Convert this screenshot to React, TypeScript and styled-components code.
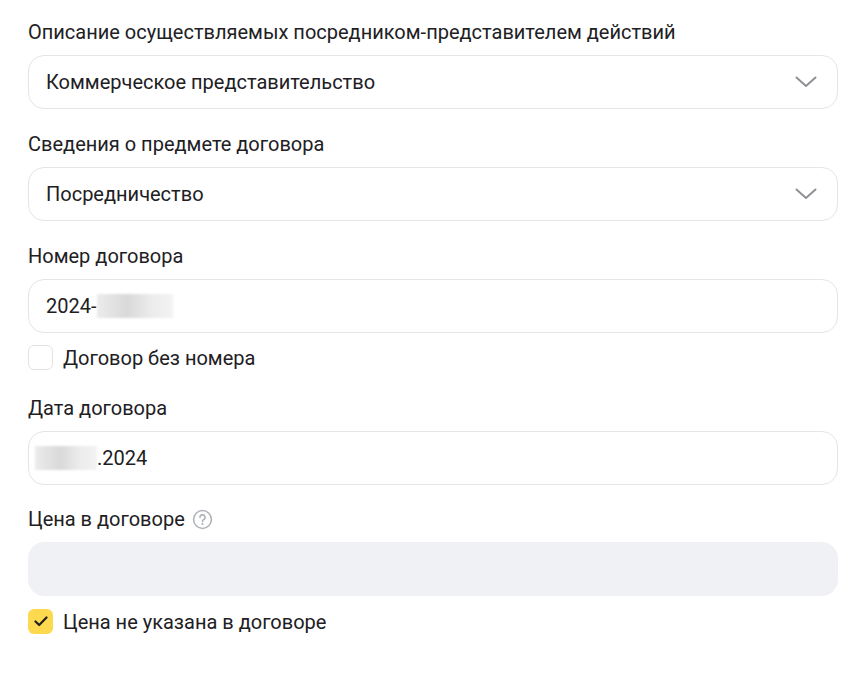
import React from "react";
import styled, { createGlobalStyle } from "styled-components";

const Global = createGlobalStyle`
  body { margin: 0; background: #fff; font-family: Roboto, "Noto Sans", sans-serif; color: #21201f; }
`;

const Form = styled.div`
  padding: 20px 28px 0 28px;
  width: 810px;
  display: flex;
  flex-direction: column;
`;

const Label = styled.div<{ $mt?: number }>`
  font-size: 20px;
  line-height: 24px;
  margin-top: ${(p) => p.$mt ?? 0}px;
  margin-bottom: 11px;
  display: flex;
  align-items: center;
  gap: 7px;
`;

const Field = styled.div<{ $disabled?: boolean; $pl?: number }>`
  height: 54px;
  box-sizing: border-box;
  border-radius: 16px;
  border: 1px solid ${(p) => (p.$disabled ? "#eff1f5" : "#e5e5e7")};
  background: ${(p) => (p.$disabled ? "#eff1f5" : "#fff")};
  display: flex;
  align-items: center;
  justify-content: space-between;
  padding: 0 20px 0 ${(p) => p.$pl ?? 17}px;
  font-size: 20px;
`;

const Value = styled.span`
  display: flex;
  align-items: center;
`;

const Blur = styled.span<{ $w: number }>`
  display: inline-block;
  width: ${(p) => p.$w}px;
  height: 24px;
  background: linear-gradient(90deg, #ececec, #d9d9d9 40%, #ebebeb 70%, #f3f3f3);
  filter: blur(1px);
`;

const CheckRow = styled.label<{ $mt: number }>`
  display: flex;
  align-items: center;
  gap: 10px;
  margin-top: ${(p) => p.$mt}px;
  font-size: 20px;
`;

const Box = styled.span<{ $checked?: boolean }>`
  width: 25px;
  height: 25px;
  box-sizing: border-box;
  border-radius: 6px;
  border: ${(p) => (p.$checked ? "none" : "1px solid #e3e3e6")};
  background: ${(p) => (p.$checked ? "#fcd94f" : "#fff")};
  display: flex;
  align-items: center;
  justify-content: center;
`;

const Chevron = () => (
  <svg width="22" height="12" viewBox="0 0 22 12" fill="none">
    <path d="M1.5 1.5L11 10L20.5 1.5" stroke="#8f9196" strokeWidth="2" strokeLinecap="round" strokeLinejoin="round" />
  </svg>
);

const Help = () => (
  <svg width="21" height="21" viewBox="0 0 20 20" fill="none">
    <circle cx="10" cy="10" r="8.5" stroke="#b0b3ba" strokeWidth="1.5" />
    <path d="M7.6 8a2.4 2.4 0 1 1 3.3 2.2c-.6.3-.9.7-.9 1.4v.4" stroke="#b0b3ba" strokeWidth="1.5" strokeLinecap="round" />
    <circle cx="10" cy="14.3" r="1" fill="#b0b3ba" />
  </svg>
);

export default function App() {
  return (
    <>
      <Global />
      <Form>
        <Label>Описание осуществляемых посредником-представителем действий</Label>
        <Field>
          <span>Коммерческое представительство</span>
          <Chevron />
        </Field>
        <Label $mt={23}>Сведения о предмете договора</Label>
        <Field>
          <span>Посредничество</span>
          <Chevron />
        </Field>
        <Label $mt={23}>Номер договора</Label>
        <Field>
          <Value>
            2024-<Blur $w={76} />
          </Value>
        </Field>
        <CheckRow $mt={12}>
          <Box />
          Договор без номера
        </CheckRow>
        <Label $mt={26}>Дата договора</Label>
        <Field $pl={6}>
          <Value>
            <Blur $w={62} />
            .2024
          </Value>
        </Field>
        <Label $mt={22}>
          Цена в договоре <Help />
        </Label>
        <Field $disabled />
        <CheckRow $mt={13}>
          <Box $checked>
            <svg width="14" height="11" viewBox="0 0 14 11" fill="none">
              <path d="M1.5 5.5L5.2 9L12.5 1.5" stroke="#21201f" strokeWidth="2.2" strokeLinecap="round" strokeLinejoin="round" />
            </svg>
          </Box>
          Цена не указана в договоре
        </CheckRow>
      </Form>
    </>
  );
}
